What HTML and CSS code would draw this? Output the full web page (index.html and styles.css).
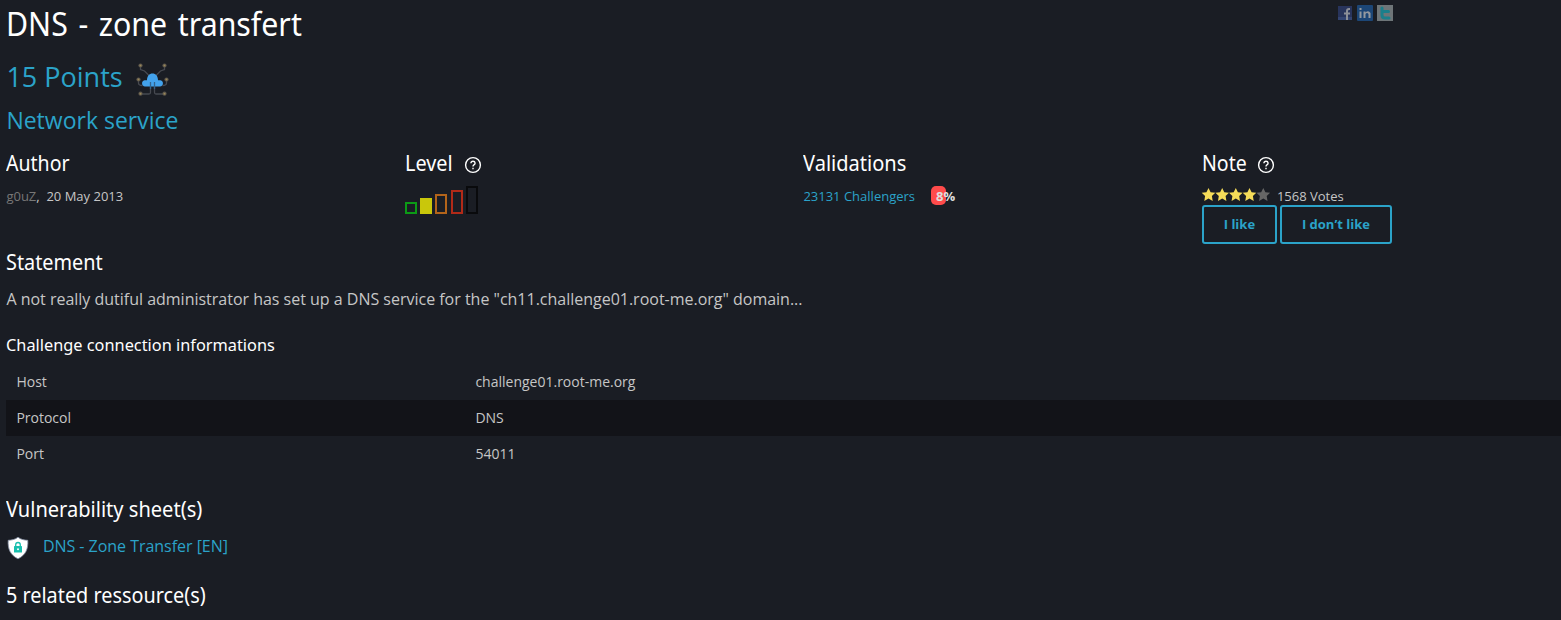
FILE: index.html
```html
<!DOCTYPE html>
<html lang="en">
<head>
<meta charset="utf-8">
<title>DNS - zone transfert</title>
<link rel="stylesheet" href="styles.css">
</head>
<body>
<main class="page">
  <header class="top">
    <h1 class="title"><span class="narrow n-title">DNS - zone transfert</span></h1>
    <div class="share">
      <svg width="16" height="16" viewBox="0 0 16 16"><rect x="1" y="1" width="14" height="14" fill="#28345c"/><path d="M1 12h14v3H1z" fill="#334472"/><path d="M9 15V6q0-3 3-3h1v2h-1q-1 0-1 1v9zM7 7.500h6v2H7z" fill="#8b8e98"/></svg>
      <svg width="16" height="16" viewBox="0 0 16 16"><rect width="16" height="16" rx="1" fill="#1c4676"/><path d="M2.500 6.500h2V13h-2zM2.500 3h2v2h-2zM6.500 6.500h2v1q3-2.500 5 .5v5h-2V9q-1.500-2-3 0v4h-2z" fill="#94999f"/></svg>
      <svg width="16" height="16" viewBox="0 0 16 16"><rect width="16" height="16" fill="#6e7578"/><path d="M5 3v7q0 3 3 3h4M5 6.500h6.500" fill="none" stroke="#1b7f8b" stroke-width="3" stroke-linecap="round"/></svg>
    </div>
  </header>
  <div class="points"><span>15 Points</span>
    <svg class="cloud" width="34" height="34" viewBox="0 0 34 34">
      <g fill="none" stroke="#464950" stroke-width="1.300"><path d="M4.500 3v3.500l4 1.500 5 5M28.500 3v3.500l-4 1.500-5 5M2.500 17v3q0 2.500 4 2.500M30.500 17v3q0 2.500-4 2.500M14.500 20v9.500q0 1.500-1.500 1.500H5M18.500 20v9.500q0 1.500 1.500 1.500h8"/></g>
      <path d="M9 23.500a3.200 3.200 0 0 1-.5-6.300H11c0-4 2.300-6.700 5.500-6.700s5.500 2.700 5.500 6.700h2.500a3.200 3.200 0 0 1-.5 6.300z" fill="#43a3ed"/>
      <path d="M14.500 19v7M18.500 19v7" stroke="#34648d" stroke-width="1.300"/>
      <g fill="#5c564b"><circle cx="4.500" cy="2.500" r="2.100"/><circle cx="28.500" cy="2.500" r="2.100"/><circle cx="2.500" cy="16.500" r="2.100"/><circle cx="30.500" cy="16.500" r="2.100"/><circle cx="4.500" cy="30.700" r="2.100"/><circle cx="28.500" cy="30.700" r="2.100"/></g>
      <g fill="#9a8758"><circle cx="4.500" cy="2.500" r="1"/><circle cx="28.500" cy="2.500" r="1"/><circle cx="2.500" cy="16.500" r="1"/><circle cx="30.500" cy="16.500" r="1"/><circle cx="4.500" cy="30.700" r="1"/><circle cx="28.500" cy="30.700" r="1"/></g>
    </svg>
  </div>
  <div class="category">Network service</div>

  <section class="facts">
    <div class="fact">
      <h4 class="label"><span class="narrow n-author">Author</span></h4>
      <div class="value"><span class="author">g0uZ</span>,&nbsp; 20 May 2013</div>
    </div>
    <div class="fact">
      <h4 class="label"><span class="narrow n-level">Level</span>
        <svg class="help" width="18" height="18" viewBox="0 0 18 18"><circle cx="9" cy="9" r="7.400"/><path d="M6.900 7.200q.2-2 2.100-2t2.100 1.800q0 1.200-1.200 1.900-.9.500-.9 1.600M9 11.700v1.500"/></svg></h4>
      <div class="bars"><i class="bar b1"></i><i class="bar b2"></i><i class="bar b3"></i><i class="bar b4"></i><i class="bar b5"></i></div>
    </div>
    <div class="fact">
      <h4 class="label"><span class="narrow n-valid">Validations</span></h4>
      <div class="value"><a class="link">23131 Challengers</a><span class="meter"><b>8%</b></span></div>
    </div>
    <div class="fact">
      <h4 class="label"><span class="narrow n-note">Note</span>
        <svg class="help" width="18" height="18" viewBox="0 0 18 18"><circle cx="9" cy="9" r="7.400"/><path d="M6.900 7.200q.2-2 2.100-2t2.100 1.800q0 1.200-1.200 1.900-.9.500-.9 1.600M9 11.700v1.500"/></svg></h4>
      <div class="value votes">
        <svg width="69" height="14" viewBox="0 0 69 14"><defs><path id="star" d="M6.500 0l2.100 4.200 4.700.6-3.400 3.300.8 4.800-4.200-2.300-4.200 2.300.8-4.800L-.3 4.800l4.700-.6z"/></defs>
          <g fill="#f5dc59"><use href="#star"/><use href="#star" x="13.700"/><use href="#star" x="27.300"/><use href="#star" x="41"/></g><use href="#star" x="54.800" fill="#666"/></svg>
        <span>1568 Votes</span>
      </div>
      <div class="buttons"><button class="btn like">I like</button><button class="btn dislike">I don’t like</button></div>
    </div>
  </section>

  <h4 class="heading statement"><span class="narrow">Statement</span></h4>
  <p class="text">A not really dutiful administrator has set up a DNS service for the "ch11.challenge01.root-me.org" domain...</p>
  <h5 class="subheading"><span class="narrow n-sub">Challenge connection informations</span></h5>
  <div class="table">
    <div class="row"><span>Host</span><span>challenge01.root-me.org</span></div>
    <div class="row alt"><span>Protocol</span><span>DNS</span></div>
    <div class="row"><span>Port</span><span>54011</span></div>
  </div>
  <h4 class="heading vuln"><span class="narrow n-vuln">Vulnerability sheet(s)</span></h4>
  <div class="sheet">
    <svg width="24" height="24" viewBox="0 0 24 24"><path d="M12 1.200c3 2.300 6 2.900 9.800 3.100.6 8.500-2.200 15-9.800 18.500C4.400 19.300 1.600 12.800 2.200 4.300 6 4.100 9 3.500 12 1.200z" fill="#fff" stroke="#8590a5" stroke-width=".8"/><rect x="8" y="10" width="8" height="6.500" rx=".6" fill="#18bfae"/><path d="M9.700 10V8.800a2.300 2.300 0 0 1 4.600 0V10" fill="none" stroke="#18bfae" stroke-width="1.300"/><circle cx="12" cy="13.200" r="1" fill="#fff"/></svg>
    <a class="link">DNS - Zone Transfer [EN]</a>
  </div>
  <h4 class="heading related"><span class="narrow">5 related ressource(s)</span></h4>
</main>
</body>
</html>
```
FILE: styles.css
```css
* { box-sizing: border-box; }
body { margin: 0; background: #1a1d24; color: #c6c6c6; font-family: "Open Sans", "Noto Sans", sans-serif; font-size: 16px; }
.page { height: 620px; overflow: hidden; padding-left: 6.400px; }
h1, h4, h5, p { margin: 0; font-weight: 400; }
h1, h4, h5 { color: #fff; font-family: "Noto Sans", sans-serif; }
.narrow { display: inline-block; transform: scaleX(.945); transform-origin: left; white-space: nowrap; }
.n-title { transform: scaleX(.918); word-spacing: 3px; }
.n-author { transform: scaleX(.93); }
.n-valid { transform: scaleX(.955); }
.n-vuln { transform: scaleX(.955); }
.top { display: flex; justify-content: space-between; height: 46px; width: 1386.600px; }
.title { padding-top: 1px; font-size: 33px; line-height: 46px; }
.share { display: flex; gap: 4px; padding-top: 5px; }
.points { display: flex; align-items: center; gap: 13px; height: 60px; color: #2ba3c9; font-size: 27px; line-height: 60px; }
.points span { width: 116.600px; padding-top: 2px; white-space: nowrap; }
.cloud { margin-top: 8px; }
.category { height: 28px; color: #2ba3c9; font-size: 23px; line-height: 28px; }
.facts { display: grid; grid-template-columns: repeat(4, 398.500px); height: 112px; padding-top: 12px; }
.label { display: flex; align-items: center; height: 34px; font-size: 21px; line-height: 34px; }
.n-level { width: 59px; }
.n-note { width: 55px; transform: scaleX(.93); }
.help { margin-top: 4px; fill: none; stroke: #fff; stroke-width: 1.400; }
.value { display: flex; align-items: center; height: 24px; margin-top: 4px; font-size: 13px; line-height: 24px; }
.author { color: #777; }
.link { color: #2ba3c9; }
.bars { display: flex; align-items: flex-end; height: 28px; margin-top: 6px; gap: 3px; }
.bar { width: 12px; border: 2px solid; }
.b1 { height: 12px; color: #0c9a16; }
.b2 { height: 16px; color: #c9c70b; background: #c9c70b; }
.b3 { height: 20px; color: #b3641a; }
.b4 { height: 24px; margin-left: 1px; color: #b22a18; }
.b5 { height: 28px; color: #090a0c; }
.meter { width: 15px; height: 19px; margin: -1px 0 0 16px; padding-left: 5px; border-radius: 5px; background: #ff4b4b; color: #dedede; line-height: 21px; white-space: nowrap; }
.votes { gap: 6px; }
.votes svg { margin-top: -2px; overflow: visible; }
.buttons { display: flex; gap: 3px; margin-top: -3px; }
.btn { height: 39px; padding: 0; border: 2px solid #2ba3c9; border-radius: 3px; background: none; color: #2ba3c9; font: 700 13px/35px "Open Sans", sans-serif; }
.like { width: 75px; }
.dislike { width: 112px; }
.heading { height: 34px; font-size: 21px; line-height: 34px; }
.statement { margin-top: -1px; }
.text { height: 40px; line-height: 40px; letter-spacing: -.01px; }
.subheading { height: 45px; font-size: 17px; line-height: 51px; }
.n-sub { transform: scaleX(.96); }
.row { display: grid; grid-template-columns: 459px 1fr; height: 36px; padding-left: 10px; font-size: 14px; line-height: 36px; }
.alt { background: #121318; }
.vuln { margin-top: 20px; }
.sheet { display: flex; align-items: center; gap: 12.500px; height: 40px; line-height: 40px; letter-spacing: -.03px; }
.sheet svg { margin-top: 3px; }
.related { margin-top: 12px; }
```
